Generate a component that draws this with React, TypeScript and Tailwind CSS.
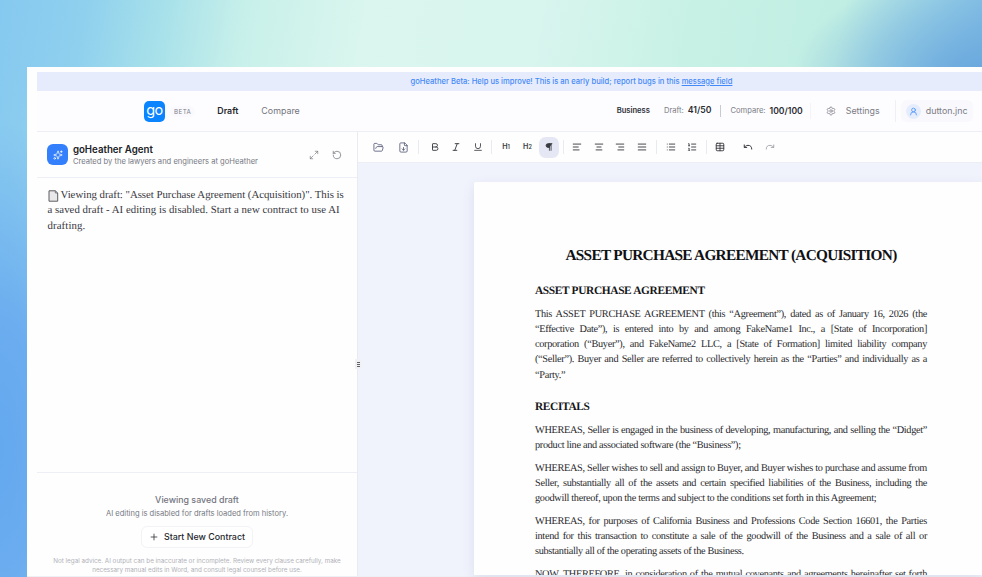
import type { ReactNode } from 'react';
import {
	AlignCenter,
	AlignLeft,
	AlignRight,
	AlignJustify,
	Bold,
	FileDown,
	FolderOpen,
	Italic,
	List,
	ListOrdered,
	Maximize2,
	Pilcrow,
	Plus,
	Redo,
	RotateCcw,
	Settings,
	Sparkles,
	Table,
	Underline,
	Undo,
	UserRound,
} from 'lucide-react';

interface Line {
	text: string;
	end?: boolean;
}

const INTRO: Line[] = [
	{ text: 'This ASSET PURCHASE AGREEMENT (this “Agreement”), dated as of January 16, 2026 (the' },
	{ text: '“Effective Date”), is entered into by and among FakeName1 Inc., a [State of Incorporation]' },
	{ text: 'corporation (“Buyer”), and FakeName2 LLC, a [State of Formation] limited liability company' },
	{ text: '(“Seller”). Buyer and Seller are referred to collectively herein as the “Parties” and individually as a' },
	{ text: '“Party.”', end: true },
];

const RECITALS: Line[][] = [
	[
		{ text: 'WHEREAS, Seller is engaged in the business of developing, manufacturing, and selling the “Didget”' },
		{ text: 'product line and associated software (the “Business”);', end: true },
	],
	[
		{ text: 'WHEREAS, Seller wishes to sell and assign to Buyer, and Buyer wishes to purchase and assume from' },
		{ text: 'Seller, substantially all of the assets and certain specified liabilities of the Business, including the' },
		{ text: 'goodwill thereof, upon the terms and subject to the conditions set forth in this Agreement;', end: true },
	],
	[
		{ text: 'WHEREAS, for purposes of California Business and Professions Code Section 16601, the Parties' },
		{ text: 'intend for this transaction to constitute a sale of the goodwill of the Business and a sale of all or' },
		{ text: 'substantially all of the operating assets of the Business.', end: true },
	],
	[{ text: 'NOW, THEREFORE, in consideration of the mutual covenants and agreements hereinafter set forth' }],
];

function Clause({ lines }: { lines: Line[] }) {
	return (
		<p className="mb-[7.6px] text-[10.3px] leading-[15.2px] tracking-[-0.32px] text-[#29292d] [text-rendering:geometricPrecision]">
			{lines.map((line) => (
				<span
					key={line.text}
					className={
						line.end ? 'block whitespace-nowrap' : 'block whitespace-nowrap [text-align-last:justify]'
					}
				>
					{line.text}
				</span>
			))}
		</p>
	);
}

function Tool({ children, active }: { children: ReactNode; active?: boolean }) {
	return (
		<span
			className={
				active
					? 'flex h-[21px] w-[21.4px] shrink-0 items-center justify-center rounded-[7px] border-x border-[#fefefe] bg-[#e5e8f4]'
					: 'flex h-5 w-[21.4px] shrink-0 items-center justify-center'
			}
		>
			{children}
		</span>
	);
}

function Divider({ className }: { className: string }) {
	return <span className={`h-[14px] w-px shrink-0 bg-[#e9eaf0] ${className}`} />;
}

function Header() {
	return (
		<header className="ml-[10px] flex h-[41px] shrink-0 items-center border-b border-[#eeeff6] bg-[#fdfdff] pl-[107px]">
			<span className="flex h-[21px] w-[21px] items-center justify-center rounded-[5px] bg-[#0a84ff] pb-[2px] text-[14.5px] leading-none tracking-[-0.5px] text-white">
				go
			</span>
			<span className="ml-[5px] rounded-full bg-[#fafafe] px-1 text-[6.2px] leading-[11px] tracking-[0.45px] text-[#7c7d86]">
				BETA
			</span>
			<span className="ml-[22px] text-[8.8px] font-semibold text-[#26272c]">Draft</span>
			<span className="ml-[23px] text-[8.9px] text-[#74757c]">Compare</span>
			<div className="ml-auto flex shrink-0 items-center pr-[9.5px] text-[7.6px] text-[#7b7c85]">
				<span className="font-semibold text-[#303138]">Business</span>
				<span className="ml-[14px]">Draft:</span>
				<span className="ml-1 text-[8.7px] font-semibold text-[#2b2c32]">41/50</span>
				<span className="ml-[9px] h-3 w-px bg-[#c9cad1]" />
				<span className="ml-[9px]">Compare:</span>
				<span className="ml-1 text-[8.6px] font-semibold text-[#2b2c32]">100/100</span>
				<span className="ml-[7px] h-4 w-px bg-[#f3f4f8]" />
				<Settings size={10} strokeWidth={1.8} className="ml-[15px]" />
				<span className="ml-[10px] text-[8.9px]">Settings</span>
				<span className="ml-[15px] h-[22px] w-px bg-[#eff0f5]" />
				<span className="ml-[5px] flex h-[22px] items-center rounded-md bg-[#f9f9fd] px-[5px]">
					<span className="flex h-[15px] w-[15px] items-center justify-center rounded-full bg-[#e5edfd] text-[#4d93fa]">
						<UserRound size={9} strokeWidth={2.2} />
					</span>
					<span className="ml-[5px] text-[8.9px]">dutton.jnc</span>
				</span>
			</div>
		</header>
	);
}

function AgentPanel() {
	return (
		<aside className="relative ml-[10px] flex w-[321px] shrink-0 flex-col border-r border-[#e9ebf4] bg-[#fefefe]">
			<div className="flex h-[46px] items-center border-b border-[#eeeff6] pl-[10.4px] pr-[15px]">
				<span className="flex h-[21px] w-[21px] items-center justify-center rounded-[6px] bg-[#347ffb] text-white">
					<Sparkles size={10} strokeWidth={1.8} />
				</span>
				<div className="ml-[4.5px]">
					<div className="text-[9.7px] font-semibold leading-[13px] text-[#202126]">goHeather Agent</div>
					<div className="text-[7.6px] leading-[11px] text-[#777983]">
						Created by the lawyers and engineers at goHeather
					</div>
				</div>
				<Maximize2 size={10} strokeWidth={1.6} className="ml-auto text-[#74757c]" />
				<RotateCcw size={10} strokeWidth={1.8} className="ml-[13px] text-[#74757c]" />
			</div>
			<div className="flex-1 whitespace-nowrap pl-[10.5px] pt-[10px] font-['Liberation_Serif',serif] text-[10.8px] leading-[15.4px] text-[#38383e] [text-rendering:geometricPrecision]">
				<div className="flex items-center tracking-[-0.02px]">
					<svg width="11" height="12" viewBox="0 0 11 12" className="mr-[2px]">
						<path d="M1 .8h6.3L9.7 3v8.2H1z" fill="#e9e9eb" stroke="#5d5d62" strokeWidth="1" />
						<path d="M7.3.8V3h2.4" fill="none" stroke="#5d5d62" strokeWidth=".7" />
					</svg>
					Viewing draft: "Asset Purchase Agreement (Acquisition)". This is
				</div>
				<div className="tracking-[0.04px]">a saved draft - AI editing is disabled. Start a new contract to use AI</div>
				<div className="tracking-[0.1px]">drafting.</div>
			</div>
			<div className="flex h-[104px] shrink-0 flex-col items-center border-t border-[#eeeff6] pt-[19.6px] text-center">
				<div className="text-[8.85px] font-medium leading-[14px] text-[#73757f]">Viewing saved draft</div>
				<div className="mt-[1px] text-[7.55px] leading-[12px] text-[#777983]">
					AI editing is disabled for drafts loaded from history.
				</div>
				<button className="mt-[6.4px] flex h-[22px] items-center rounded-md border border-[#f3f3f7] bg-white px-[7px] text-[8.9px] font-medium text-[#26272c]">
					<Plus size={10} strokeWidth={1.8} className="mr-[5px]" />
					Start New Contract
				</button>
				<div className="mt-[8.6px] whitespace-nowrap text-[6.3px] leading-[9.6px] text-[#b1b2b9]">
					Not legal advice. AI output can be inaccurate or incomplete. Review every clause carefully, make
					<br />
					necessary manual edits in Word, and consult legal counsel before use.
				</div>
			</div>

			{/* Resize grip on the panel edge */}
			<span className="absolute -right-1 top-[227px] z-10 flex h-[10px] w-[6px] flex-col items-center justify-center gap-px rounded-[1px] bg-[#f1f1f4]">
				<i className="h-px w-[3px] bg-[#606168]" />
				<i className="h-px w-[3px] bg-[#606168]" />
				<i className="h-px w-[3px] bg-[#606168]" />
			</span>
		</aside>
	);
}

function Toolbar() {
	return (
		<div className="flex h-[31px] shrink-0 items-center border-b border-[#eceef6] bg-[#fefefe] pl-[9.6px] text-[#393a40]">
			<Tool><FolderOpen size={11} strokeWidth={1.8} className="text-[#535775]" /></Tool>
			<span className="w-[4px]" />
			<Tool><FileDown size={11} strokeWidth={1.8} className="text-[#535775]" /></Tool>
			<Divider className="ml-[4px] mr-[4.8px]" />
			<Tool><Bold size={10} strokeWidth={2.2} /></Tool>
			<Tool><Italic size={10} strokeWidth={2.2} /></Tool>
			<Tool><Underline size={10} strokeWidth={2} /></Tool>
			<Divider className="mx-[3px]" />
			<Tool><span className="text-[7.2px] font-semibold">H<span className="text-[5.5px]">1</span></span></Tool>
			<Tool><span className="text-[7.2px] font-semibold">H<span className="text-[5.5px]">2</span></span></Tool>
			<Tool active><Pilcrow size={10} strokeWidth={2} fill="currentColor" /></Tool>
			<Divider className="mx-[3.1px]" />
			<Tool><AlignLeft size={10} strokeWidth={2.2} /></Tool>
			<Tool><AlignCenter size={10} strokeWidth={2.2} /></Tool>
			<Tool><AlignRight size={10} strokeWidth={2.2} /></Tool>
			<Tool><AlignJustify size={10} strokeWidth={2.2} /></Tool>
			<Divider className="mx-[3.3px]" />
			<Tool><List size={10} strokeWidth={2.2} /></Tool>
			<Tool><ListOrdered size={10} strokeWidth={2.2} /></Tool>
			<Divider className="mx-[3px]" />
			<Tool><Table size={10} strokeWidth={2.2} /></Tool>
			<span className="w-[6.6px]" />
			<Tool><Undo size={10} strokeWidth={2.4} /></Tool>
			<Tool><Redo size={10} strokeWidth={2} className="text-[#9a9ba1]" /></Tool>
		</div>
	);
}

export default function App() {
	return (
		<div className="h-[577px] w-[982px] overflow-hidden bg-[radial-gradient(ellipse_110px_330px_at_0px_450px,#64a8ee_0%,#6badef_40%,transparent_100%),radial-gradient(ellipse_190px_110px_at_982px_80px,#68a6dd_0%,transparent_100%),linear-gradient(100deg,#86c9f0_0%,#8fd0ee_8%,#a6e0ea_15%,#c8f0ea_23%,#daf6ee_34%,#d8f5ee_50%,#c8f1e5_64%,#c0eee3_78%,#9fd6e6_86%,#7bb8e6_94%,#76b2e4_100%)] pl-[27px] pt-[67px] font-['Inter',sans-serif]">
			<div className="flex h-[510px] flex-col bg-[#fefefe] pt-[5px]">
				{/* Centred on the full window, which runs past the right edge */}
				<div className="ml-[10px] flex h-[19px] w-[1069px] shrink-0 items-center justify-center bg-[#e6ecfc] text-[7.6px] font-medium text-[#4489f8]">
					<span>goHeather Beta: Help us improve! This is an early build; report bugs in this <u>message field</u></span>
				</div>
				<Header />
				<div className="flex min-h-0 flex-1 border-b border-[#eff0f6]">
					<AgentPanel />
					<main className="flex min-w-0 flex-1 flex-col bg-[#f0f3fc] pb-px">
						<Toolbar />
						<article className="ml-[116px] mt-[19px] min-h-0 flex-1 overflow-hidden rounded-tl-[2px] bg-[#fefefe] pl-[61px] pr-[55px] pt-[62.7px] font-['Liberation_Serif',serif] shadow-[0_4px_12px_rgba(90,100,140,0.13)]">
							<h1 className="whitespace-nowrap text-center text-[15.3px] font-bold leading-[22px] tracking-[-0.7px] text-[#111114] [text-rendering:geometricPrecision]">
								ASSET PURCHASE AGREEMENT (ACQUISITION)
							</h1>
							<h2 className="mb-[8.2px] mt-[16px] text-[11.4px] font-bold leading-4 tracking-[-0.36px] text-[#161619] [text-rendering:geometricPrecision]">
								ASSET PURCHASE AGREEMENT
							</h2>
							<Clause lines={INTRO} />
							<h2 className="mb-[8.2px] mt-[15.8px] text-[11.4px] font-bold leading-4 tracking-[-0.36px] text-[#161619] [text-rendering:geometricPrecision]">
								RECITALS
							</h2>
							{RECITALS.map((lines) => (
								<Clause key={lines[0].text} lines={lines} />
							))}
						</article>
					</main>
				</div>
			</div>
		</div>
	);
}
